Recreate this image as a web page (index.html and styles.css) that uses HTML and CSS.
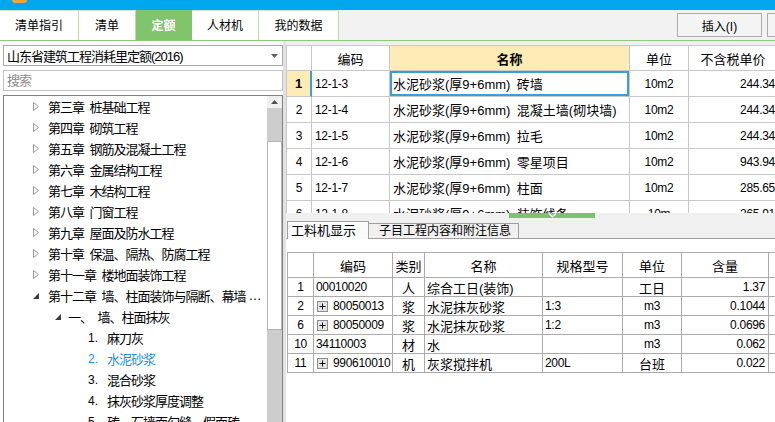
FILE: index.html
```html
<!DOCTYPE html>
<html lang="zh-CN">
<head>
<meta charset="utf-8">
<title>定额</title>
<link rel="stylesheet" href="styles.css">
</head>
<body>
<div class="app">
  <div class="titlebar"><span class="logo"></span></div>

  <div class="tabbar">
    <div class="tabs">
      <div class="tab w1">清单指引</div>
      <div class="tab w2">清单</div>
      <div class="tab w3 active">定额</div>
      <div class="tab w4">人材机</div>
      <div class="tab w5">我的数据</div>
    </div>
    <div class="tools">
      <button class="btn">插入(I)</button>
      <button class="btn cut"></button>
    </div>
  </div>

  <div class="main">
    <aside class="left">
      <div class="select">
        <span>山东省建筑工程消耗里定额(2016)</span>
        <svg class="caret" width="7" height="4" viewBox="0 0 7 4"><path d="M0 0 H7 L3.5 4 Z" fill="#606060"/></svg>
      </div>
      <div class="search">搜索</div>
      <div class="treebox">
        <ul class="tree">
          <li class="n l1"><span class="ic"><svg width="6" height="9" viewBox="0 0 6 9"><path d="M0.5 0.5 L5.5 4.5 L0.5 8.5 Z" fill="#fff" stroke="#9a9a9a"/></svg></span>第三章&ensp;桩基础工程</li>
          <li class="n l1"><span class="ic"><svg width="6" height="9" viewBox="0 0 6 9"><path d="M0.5 0.5 L5.5 4.5 L0.5 8.5 Z" fill="#fff" stroke="#9a9a9a"/></svg></span>第四章&ensp;砌筑工程</li>
          <li class="n l1"><span class="ic"><svg width="6" height="9" viewBox="0 0 6 9"><path d="M0.5 0.5 L5.5 4.5 L0.5 8.5 Z" fill="#fff" stroke="#9a9a9a"/></svg></span>第五章&ensp;钢筋及混凝土工程</li>
          <li class="n l1"><span class="ic"><svg width="6" height="9" viewBox="0 0 6 9"><path d="M0.5 0.5 L5.5 4.5 L0.5 8.5 Z" fill="#fff" stroke="#9a9a9a"/></svg></span>第六章&ensp;金属结构工程</li>
          <li class="n l1"><span class="ic"><svg width="6" height="9" viewBox="0 0 6 9"><path d="M0.5 0.5 L5.5 4.5 L0.5 8.5 Z" fill="#fff" stroke="#9a9a9a"/></svg></span>第七章&ensp;木结构工程</li>
          <li class="n l1"><span class="ic"><svg width="6" height="9" viewBox="0 0 6 9"><path d="M0.5 0.5 L5.5 4.5 L0.5 8.5 Z" fill="#fff" stroke="#9a9a9a"/></svg></span>第八章&ensp;门窗工程</li>
          <li class="n l1"><span class="ic"><svg width="6" height="9" viewBox="0 0 6 9"><path d="M0.5 0.5 L5.5 4.5 L0.5 8.5 Z" fill="#fff" stroke="#9a9a9a"/></svg></span>第九章&ensp;屋面及防水工程</li>
          <li class="n l1"><span class="ic"><svg width="6" height="9" viewBox="0 0 6 9"><path d="M0.5 0.5 L5.5 4.5 L0.5 8.5 Z" fill="#fff" stroke="#9a9a9a"/></svg></span>第十章&ensp;保温、隔热、防腐工程</li>
          <li class="n l1"><span class="ic"><svg width="6" height="9" viewBox="0 0 6 9"><path d="M0.5 0.5 L5.5 4.5 L0.5 8.5 Z" fill="#fff" stroke="#9a9a9a"/></svg></span>第十一章&ensp;楼地面装饰工程</li>
          <li class="n l1"><span class="ic"><svg width="6" height="6" viewBox="0 0 6 6"><path d="M6 0 L6 6 L0 6 Z" fill="#3c3c3c"/></svg></span>第十二章&ensp;墙、柱面装饰与隔断、幕墙<span class="ell">…</span></li>
          <li class="n l2"><span class="ic"><svg width="6" height="6" viewBox="0 0 6 6"><path d="M6 0 L6 6 L0 6 Z" fill="#3c3c3c"/></svg></span>一、&ensp;墙、柱面抹灰</li>
          <li class="n l3"><span class="no">1.</span>麻刀灰</li>
          <li class="n l3 cur"><span class="no">2.</span>水泥砂浆</li>
          <li class="n l3"><span class="no">3.</span>混合砂浆</li>
          <li class="n l3"><span class="no">4.</span>抹灰砂浆厚度调整</li>
          <li class="n l3"><span class="no">5.</span>砖、石墙面勾缝、假面砖</li>
        </ul>
        <div class="vscroll">
          <div class="sb-up"><svg width="7" height="4" viewBox="0 0 7 4"><path d="M0 4 L3.5 0 L7 4 Z" fill="#505050"/></svg></div>
          <div class="sb-gap"></div>
          <div class="sb-thumb"></div>
        </div>
      </div>
    </aside>

    <div class="splitter"></div>

    <section class="right">
      <div class="upper">
        <div class="tgrid">
          <div class="c"></div>
          <div class="c ctr">编码</div>
          <div class="c ctr hname">名称</div>
          <div class="c ctr">单位</div>
          <div class="c ctr">不含税单价</div>

          <div class="c ctr rh1">1</div>
          <div class="c num">12-1-3</div>
          <div class="c sel">水泥砂浆(厚9+6mm)&ensp;砖墙</div>
          <div class="c ctr num">10m2</div>
          <div class="c r num">244.34</div>

          <div class="c ctr num">2</div>
          <div class="c num">12-1-4</div>
          <div class="c">水泥砂浆(厚9+6mm)&ensp;混凝土墙(砌块墙)</div>
          <div class="c ctr num">10m2</div>
          <div class="c r num">244.34</div>

          <div class="c ctr num">3</div>
          <div class="c num">12-1-5</div>
          <div class="c">水泥砂浆(厚9+6mm)&ensp;拉毛</div>
          <div class="c ctr num">10m2</div>
          <div class="c r num">244.34</div>

          <div class="c ctr num">4</div>
          <div class="c num">12-1-6</div>
          <div class="c">水泥砂浆(厚9+6mm)&ensp;零星项目</div>
          <div class="c ctr num">10m2</div>
          <div class="c r num">943.94</div>

          <div class="c ctr num">5</div>
          <div class="c num">12-1-7</div>
          <div class="c">水泥砂浆(厚9+6mm)&ensp;柱面</div>
          <div class="c ctr num">10m2</div>
          <div class="c r num">285.65</div>

          <div class="c ctr num">6</div>
          <div class="c num">12-1-8</div>
          <div class="c">水泥砂浆(厚9+6mm)&ensp;装饰线条</div>
          <div class="c ctr num">10m</div>
          <div class="c r num">265.91</div>
        </div>
      </div>

      <div class="lower">
        <div class="handle">
          <div class="grip"><svg width="9" height="5" viewBox="0 0 9 5"><path d="M1 0.5 L4.5 4 L8 0.5" fill="none" stroke="#fff" stroke-width="1.2"/></svg></div>
        </div>
        <div class="subtabs">
          <div class="stab on">工料机显示</div>
          <div class="stab">子目工程内容和附注信息</div>
        </div>
        <div class="lowerbody">
          <div class="bgrid">
            <div class="c"></div>
            <div class="c ctr">编码</div>
            <div class="c ctr">类别</div>
            <div class="c ctr">名称</div>
            <div class="c ctr">规格型号</div>
            <div class="c ctr">单位</div>
            <div class="c ctr">含量</div>
            <div class="c"></div>

            <div class="c ctr num">1</div>
            <div class="c num">00010020</div>
            <div class="c ctr">人</div>
            <div class="c">综合工日(装饰)</div>
            <div class="c num"></div>
            <div class="c ctr">工日</div>
            <div class="c r num">1.37</div>
            <div class="c"></div>

            <div class="c ctr num">2</div>
            <div class="c num"><svg class="plus" width="11" height="11" viewBox="0 0 11 11"><rect x="0.5" y="0.5" width="10" height="10" fill="#e4e4e4" stroke="#8c8c8c"/><path d="M2.5 5.5 H8.5 M5.5 2.5 V8.5" stroke="#000" stroke-width="1"/></svg>80050013</div>
            <div class="c ctr">浆</div>
            <div class="c">水泥抹灰砂浆</div>
            <div class="c num">1:3</div>
            <div class="c ctr num">m3</div>
            <div class="c r num">0.1044</div>
            <div class="c"></div>

            <div class="c ctr num">6</div>
            <div class="c num"><svg class="plus" width="11" height="11" viewBox="0 0 11 11"><rect x="0.5" y="0.5" width="10" height="10" fill="#e4e4e4" stroke="#8c8c8c"/><path d="M2.5 5.5 H8.5 M5.5 2.5 V8.5" stroke="#000" stroke-width="1"/></svg>80050009</div>
            <div class="c ctr">浆</div>
            <div class="c">水泥抹灰砂浆</div>
            <div class="c num">1:2</div>
            <div class="c ctr num">m3</div>
            <div class="c r num">0.0696</div>
            <div class="c"></div>

            <div class="c ctr num">10</div>
            <div class="c num">34110003</div>
            <div class="c ctr">材</div>
            <div class="c">水</div>
            <div class="c num"></div>
            <div class="c ctr num">m3</div>
            <div class="c r num">0.062</div>
            <div class="c"></div>

            <div class="c ctr num">11</div>
            <div class="c num"><svg class="plus" width="11" height="11" viewBox="0 0 11 11"><rect x="0.5" y="0.5" width="10" height="10" fill="#e4e4e4" stroke="#8c8c8c"/><path d="M2.5 5.5 H8.5 M5.5 2.5 V8.5" stroke="#000" stroke-width="1"/></svg>990610010</div>
            <div class="c ctr">机</div>
            <div class="c">灰浆搅拌机</div>
            <div class="c num">200L</div>
            <div class="c ctr">台班</div>
            <div class="c r num">0.022</div>
            <div class="c"></div>
          </div>
        </div>
      </div>
    </section>
  </div>
</div>
</body>
</html>
```

FILE: styles.css
```css
* { box-sizing: border-box; margin: 0; padding: 0; }

html, body {
  width: 775px;
  height: 422px;
  overflow: hidden;
  background: #f0f0f0;
}

body {
  font-family: "Liberation Sans", "Noto Sans CJK SC", sans-serif;
  font-size: 13px;
  letter-spacing: -1px;
  color: #000;
}

.app {
  display: flex;
  flex-direction: column;
  height: 422px;
}

/* title strip */
.titlebar {
  height: 10px;
  flex: none;
  background: #00a7ec;
}
.logo {
  display: block;
  margin-left: 12px;
  width: 15px;
  height: 3px;
  background: #f5a431;
  border-radius: 0 0 4px 4px;
}

/* top tabs */
.tabbar {
  height: 31px;
  flex: none;
  display: flex;
  background: #f2f2f2;
  border-bottom: 1px solid #8ccb78;
  overflow: hidden;
  letter-spacing: 0;
}
.tabs { display: flex; flex: none; }
.tab {
  height: 30px;
  line-height: 30px;
  text-align: center;
  font-size: 12px;
  background: #fff;
  border-right: 1px solid #b7e0a8;
  border-top: 1px solid #d3ebc8;
}
.tab.w1 { width: 79px; }
.tab.w2 { width: 57px; }
.tab.w3 { width: 56px; }
.tab.w4 { width: 67px; }
.tab.w5 { width: 80px; }
.tab.active {
  background: #80c46c;
  border-color: #80c46c;
  color: #fff;
  font-weight: bold;
}
.tools {
  display: flex;
  flex: none;
  gap: 5px;
  margin-left: 338px;
  padding-top: 3px;
}
.btn {
  flex: none;
  width: 85px;
  height: 24px;
  font: 12px "Liberation Sans", "Noto Sans CJK SC", sans-serif;
  color: #000;
  background: #f4f4f4;
  border: 1px solid #adadad;
}
.btn.cut { width: 30px; }

/* main */
.main {
  flex: 1;
  display: flex;
  min-height: 0;
}

.left {
  width: 283px;
  flex: none;
  background: #fff;
  padding: 4px 0 0 3px;
  display: flex;
  flex-direction: column;
  gap: 4px;
  overflow: hidden;
}
.select {
  height: 21px;
  flex: none;
  border: 1px solid #a9a9a9;
  display: flex;
  align-items: center;
  padding-left: 3px;
  white-space: nowrap;
}
.caret { margin-left: auto; margin-right: 4px; }
.search {
  height: 21px;
  flex: none;
  border: 1px solid #c3c3c3;
  color: #8c8c8c;
  padding-left: 3px;
  line-height: 19px;
}
.treebox {
  height: 345px;
  flex: none;
  border: 1px solid #828282;
  display: flex;
}
.tree {
  flex: 1;
  list-style: none;
  overflow: hidden;
}
.n {
  display: flex;
  align-items: center;
  height: 21px;
  white-space: nowrap;
}
.ic { flex: none; display: flex; align-items: center; }
.l1 { padding-left: 29px; }
.l1 .ic { width: 15px; }
.l2 { padding-left: 51px; }
.l2 .ic { width: 13px; }
.l3 { padding-left: 84px; }
.no { width: 19px; flex: none; font-size: 12px; letter-spacing: 0; }
.ell { letter-spacing: 0; margin-left: 3px; }
.cur { color: #1a8fec; }

.vscroll {
  width: 15px;
  flex: none;
  display: flex;
  flex-direction: column;
  background: #cdcdcd;
}
.sb-up {
  height: 12px;
  background: #f0f0f0;
  display: flex;
  align-items: center;
  justify-content: center;
}
.sb-gap { height: 33px; }
.sb-thumb {
  height: 189px;
  background: #fff;
  border: 1px solid #b4b4b4;
}

.splitter {
  width: 3px;
  flex: none;
  background: #e2e2e2;
}

/* right side */
.right {
  flex: 1;
  min-width: 0;
  display: flex;
  flex-direction: column;
  overflow: hidden;
}
.upper {
  height: 172px;
  flex: none;
  padding-top: 4px;
  background: #f0f0f0;
  overflow: hidden;
}
.c {
  border-right: 1px solid #c8c8c8;
  border-bottom: 1px solid #c8c8c8;
  display: flex;
  align-items: center;
  padding: 0 3px;
  white-space: nowrap;
  overflow: hidden;
  background: #fff;
}
.c.ctr { justify-content: center; }
.c.r { justify-content: flex-end; padding-right: 2px; }
.num { font-size: 12px; letter-spacing: -0.3px; }

.tgrid {
  display: grid;
  grid-template-columns: 25px 78px 240px 59px 89px;
  grid-template-rows: 25px;
  grid-auto-rows: 26px;
  border-left: 1px solid #c8c8c8;
  border-top: 1px solid #c8c8c8;
  width: max-content;
  letter-spacing: 0;
}
.tgrid .c.hname { background: #feebb6; font-weight: bold; }
.tgrid .c.rh1 {
  background: #feebb6;
  font-weight: bold;
  border-right: 2px solid #3a9fd6;
}
.tgrid .c.sel { box-shadow: inset 0 0 0 2px #3a9fd6; }

.lower {
  flex: 1;
  min-height: 0;
  display: flex;
  flex-direction: column;
  background: #f0f0f0;
}
.handle { height: 5px; flex: none; }
.grip {
  width: 86px;
  height: 5px;
  margin-left: 223px;
  background: #7dc36b;
  display: flex;
  justify-content: center;
}
.subtabs {
  height: 21px;
  flex: none;
  display: flex;
  align-items: flex-end;
  border-bottom: 1px solid #a0a0a0;
  padding-left: 1px;
  letter-spacing: 0;
}
.stab {
  height: 15px;
  width: 150px;
  padding-left: 10px;
  font-size: 12px;
  line-height: 14px;
  background: #f0f0f0;
  border-top: 1px solid #a0a0a0;
  border-right: 1px solid #a0a0a0;
  white-space: nowrap;
}
.stab.on {
  width: 82px;
  height: 18px;
  margin-bottom: -1px;
  padding-left: 3px;
  font-size: 13px;
  line-height: 17px;
  background: #fbfbfb;
  border-left: 1px solid #a0a0a0;
}
.lowerbody {
  flex: 1;
  background: #fff;
  padding: 13px 0 0 1px;
  overflow: hidden;
}
.bgrid {
  display: grid;
  grid-template-columns: 26px 79px 32px 118px 80px 59px 87px 20px;
  grid-template-rows: 25px;
  grid-auto-rows: 19px;
  border-left: 1px solid #ababab;
  border-top: 1px solid #ababab;
  width: max-content;
  letter-spacing: 0;
}
.bgrid .c { border-color: #ababab; padding: 0 2px; }
.bgrid .c.r { padding-right: 3px; }
.bgrid .num { letter-spacing: -0.3px; }
.plus { flex: none; margin: 0 5px 0 1px; }
```
